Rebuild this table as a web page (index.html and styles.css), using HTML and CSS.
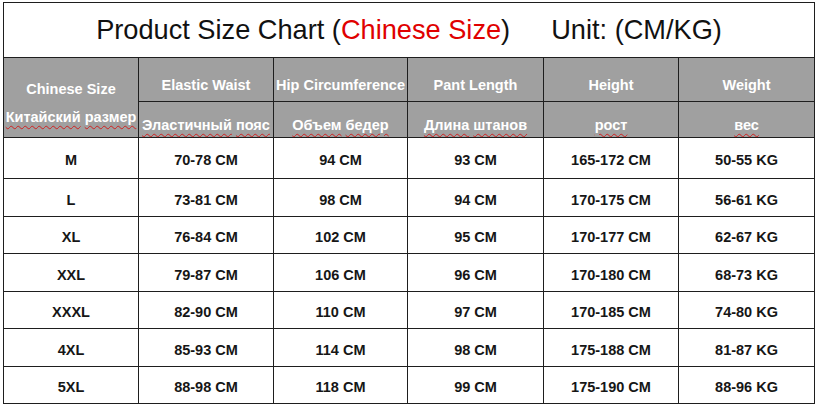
FILE: index.html
```html
<!DOCTYPE html>
<html lang="en">
<head>
<meta charset="utf-8">
<title>Product Size Chart</title>
<link rel="stylesheet" href="styles.css">
</head>
<body>
<div class="wrap">
  <div class="chart">
    <div class="title"><span>Product Size Chart (<span class="red">Chinese Size</span>)</span><span class="unit">Unit: (CM/KG)</span></div>

    <div class="hcell first"><div class="l1">Chinese Size</div><div class="l2"><span class="sq">Китайский</span> <span class="sq">размер</span></div></div>
    <div class="hcell">Elastic Waist</div>
    <div class="hcell">Hip Circumference</div>
    <div class="hcell">Pant Length</div>
    <div class="hcell">Height</div>
    <div class="hcell">Weight</div>

    <div class="hcell ru"><span><span class="sq">Эластичный</span> <span class="sq">пояс</span></span></div>
    <div class="hcell ru"><span><span class="sq">Объем</span> <span class="sq">бедер</span></span></div>
    <div class="hcell ru"><span><span class="sq">Длина</span> <span class="sq">штанов</span></span></div>
    <div class="hcell ru"><span><span class="sq">рост</span></span></div>
    <div class="hcell ru"><span><span class="sq">вес</span></span></div>

    <div class="cell">M</div><div class="cell">70-78 CM</div><div class="cell">94 CM</div><div class="cell">93 CM</div><div class="cell">165-172 CM</div><div class="cell">50-55 KG</div>
    <div class="cell">L</div><div class="cell">73-81 CM</div><div class="cell">98 CM</div><div class="cell">94 CM</div><div class="cell">170-175 CM</div><div class="cell">56-61 KG</div>
    <div class="cell">XL</div><div class="cell">76-84 CM</div><div class="cell">102 CM</div><div class="cell">95 CM</div><div class="cell">170-177 CM</div><div class="cell">62-67 KG</div>
    <div class="cell">XXL</div><div class="cell">79-87 CM</div><div class="cell">106 CM</div><div class="cell">96 CM</div><div class="cell">170-180 CM</div><div class="cell">68-73 KG</div>
    <div class="cell">XXXL</div><div class="cell">82-90 CM</div><div class="cell">110 CM</div><div class="cell">97 CM</div><div class="cell">170-185 CM</div><div class="cell">74-80 KG</div>
    <div class="cell">4XL</div><div class="cell">85-93 CM</div><div class="cell">114 CM</div><div class="cell">98 CM</div><div class="cell">175-188 CM</div><div class="cell">81-87 KG</div>
    <div class="cell">5XL</div><div class="cell">88-98 CM</div><div class="cell">118 CM</div><div class="cell">99 CM</div><div class="cell">175-190 CM</div><div class="cell">88-96 KG</div>
  </div>
</div>
</body>
</html>
```

FILE: styles.css
```css
html, body {
  margin: 0;
  padding: 0;
  background: #ffffff;
}

.wrap {
  padding: 2px 0 0 3px;
  font-family: "Liberation Sans", Arial, sans-serif;
}

.chart {
  display: grid;
  width: max-content;
  grid-template-columns: 134px 134px 133px 135px 134px 135px;
  grid-template-rows: 54px 43px 35px 40px 37px 36px 37px 36px 37px 36px;
  gap: 1px;
  padding: 1px;
  background: #1e1e1e;
}

.title {
  grid-column: 1 / -1;
  background: #ffffff;
  display: flex;
  align-items: center;
  justify-content: center;
  font-size: 27.2px;
  color: #111111;
  white-space: nowrap;
}

.red {
  color: #e00000;
}

.unit {
  margin-left: 41px;
}

.hcell {
  background: #a0a0a0;
  color: #ffffff;
  font-weight: bold;
  font-size: 14.5px;
  display: flex;
  align-items: center;
  justify-content: center;
  padding-top: 10px;
  box-sizing: border-box;
  white-space: nowrap;
}

.hcell.first {
  grid-row: span 2;
  flex-direction: column;
  padding-top: 11px;
  line-height: 28px;
}

.sq {
  text-decoration: underline wavy #d02020;
  text-decoration-thickness: 1px;
  text-underline-offset: 3px;
}

.cell {
  background: #ffffff;
  color: #161616;
  font-weight: bold;
  font-size: 14.5px;
  display: flex;
  align-items: center;
  justify-content: center;
  padding-top: 4px;
  box-sizing: border-box;
  white-space: nowrap;
}
```
